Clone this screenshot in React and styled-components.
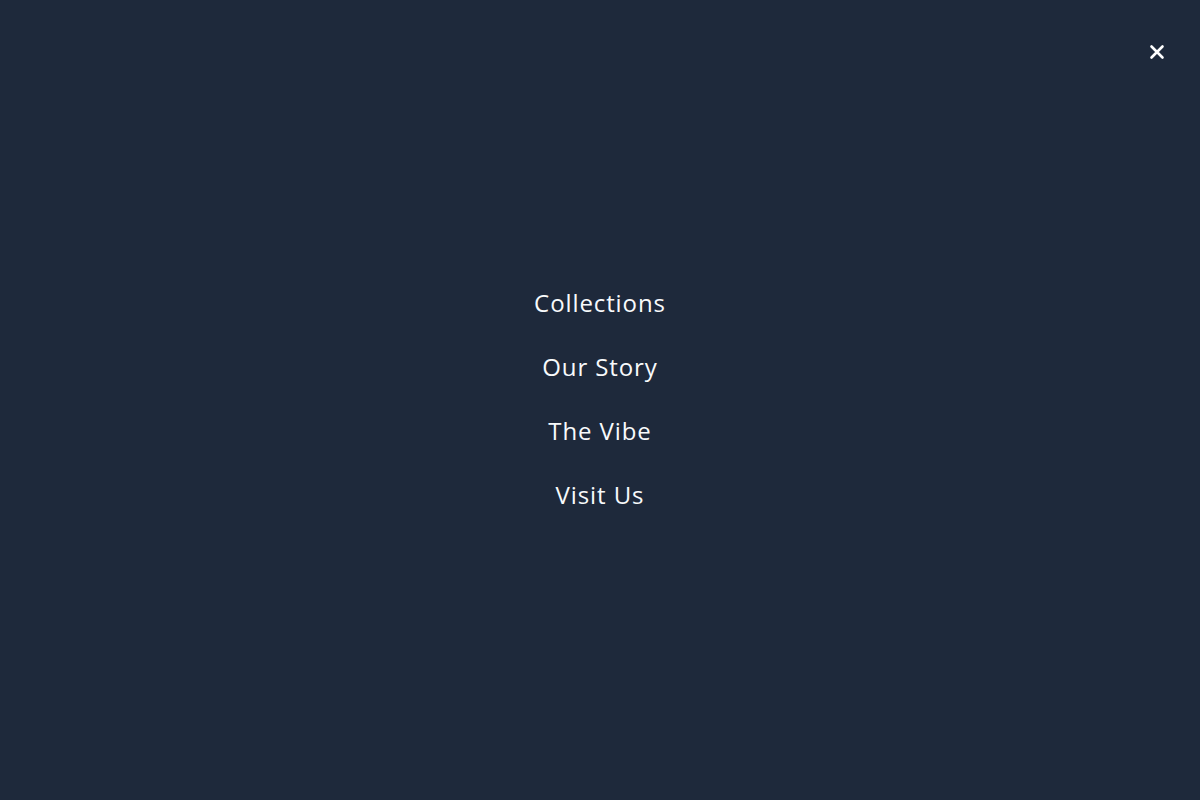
import React from "react";
import styled, { createGlobalStyle } from "styled-components";

const Global = createGlobalStyle`
  html, body { margin: 0; padding: 0; height: 100%; }
  body { background: #1e293b; font-family: "Open Sans", "Noto Sans", sans-serif; }
  #root { height: 100%; }
`;

const Overlay = styled.div`
  position: fixed;
  inset: 0;
  background: #1e293b;
  display: flex;
  align-items: center;
  justify-content: center;
`;

const Close = styled.button`
  position: absolute;
  top: 40px;
  right: 31px;
  width: 24px;
  height: 24px;
  padding: 0;
  border: none;
  background: transparent;
  color: #ffffff;
  display: flex;
  align-items: center;
  justify-content: center;
  cursor: pointer;
`;

const Nav = styled.nav`
  display: flex;
  flex-direction: column;
  align-items: center;
  gap: 32px;
  padding-bottom: 2px;
`;

const NavLink = styled.a`
  font-family: "Open Sans", "Noto Sans", sans-serif;
  font-size: 24px;
  line-height: 32px;
  font-weight: 400;
  color: #f8fafc;
  text-decoration: none;
  letter-spacing: 0.9px;
`;

const items = ["Collections", "Our Story", "The Vibe", "Visit Us"];

export default function App() {
  return (
    <>
      <Global />
      <Overlay>
        <Close aria-label="Close menu">
          <svg width="24" height="24" viewBox="0 0 24 24" fill="none" stroke="currentColor" strokeWidth="2.6" strokeLinecap="round">
            <path d="M6.5 6.5l11 11M17.5 6.5l-11 11" />
          </svg>
        </Close>
        <Nav>
          {items.map((t) => (
            <NavLink key={t} href="#">{t}</NavLink>
          ))}
        </Nav>
      </Overlay>
    </>
  );
}
